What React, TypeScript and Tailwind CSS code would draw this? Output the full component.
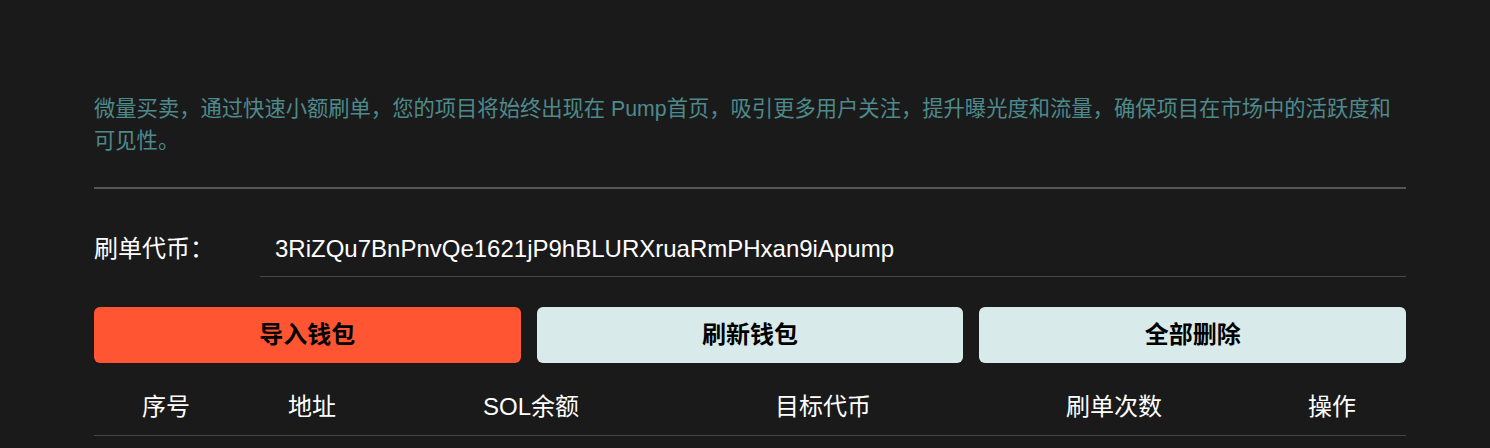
import React from "react";

const columns = [
  { label: "序号", w: "w-[144px]" },
  { label: "地址", w: "w-[148px]" },
  { label: "SOL余额", w: "w-[290px]" },
  { label: "目标代币", w: "w-[294px]" },
  { label: "刷单次数", w: "w-[288px]" },
  { label: "操作", w: "flex-1" },
];

const App = () => {
  return (
    <div
      className="min-h-[448px] bg-[#1a1a1a] pl-[94px] pr-[84px] pt-[93px]"
      style={{ fontFamily: '"Liberation Sans", Arial, "Noto Sans CJK SC", sans-serif' }}
    >
      <p className="text-[21.3px] leading-[32px] text-[#4e8a8c]">
        微量买卖，通过快速小额刷单，您的项目将始终出现在 Pump首页，吸引更多用户关注，提升曝光度和流量，确保项目在市场中的活跃度和可见性。
      </p>

      <div className="mt-[30px] h-[2px] bg-[#555555]" />

      <div className="mt-[32px] flex items-center">
        <label className="w-[166px] text-[24px] text-white">刷单代币：</label>
        <input
          readOnly
          value="3RiZQu7BnPnvQe1621jP9hBLURXruaRmPHxan9iApump"
          className="h-[56px] flex-1 border-b border-[#474747] bg-transparent px-[15px] text-[24px] text-white outline-none"
        />
      </div>

      <div className="mt-[30px] grid grid-cols-3 gap-4">
        <button className="h-[56px] rounded-md bg-[#ff5533] text-[24px] font-bold text-black">
          导入钱包
        </button>
        <button className="h-[56px] rounded-md bg-[#d9eaea] text-[24px] font-bold text-black">
          刷新钱包
        </button>
        <button className="h-[56px] rounded-md bg-[#d9eaea] text-[24px] font-bold text-black">
          全部删除
        </button>
      </div>

      <div className="mt-[28px] flex items-center border-b border-[#444444] pb-[12px]">
        {columns.map((c) => (
          <div key={c.label} className={`${c.w} text-center text-[24px] leading-[32px] text-white`}>
            {c.label}
          </div>
        ))}
      </div>
    </div>
  );
};

export default App;
